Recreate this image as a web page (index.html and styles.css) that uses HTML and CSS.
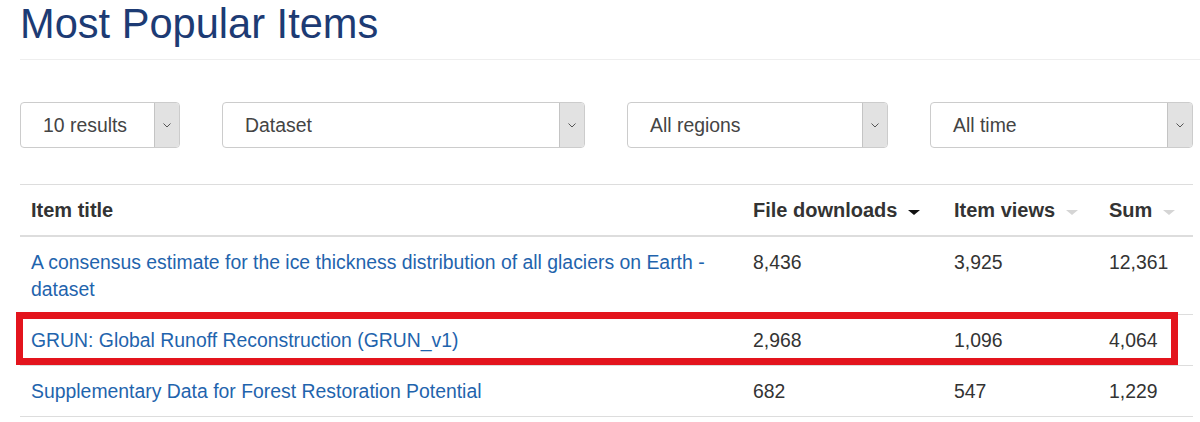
FILE: index.html
```html
<!DOCTYPE html>
<html lang="en">
<head>
<meta charset="utf-8">
<title>Most Popular Items</title>
<link rel="stylesheet" href="styles.css">
</head>
<body>
<div class="page">
  <h1 class="title">Most Popular Items</h1>
  <div class="filters">
    <div class="select s-results"><span class="sel-text">10 results</span><span class="sel-btn"><svg width="8" height="5" viewBox="0 0 8 5"><path d="M0.5 0.5 L4 4 L7.5 0.5" fill="none" stroke="#555" stroke-width="1"/></svg></span></div>
    <div class="select s-type"><span class="sel-text">Dataset</span><span class="sel-btn"><svg width="8" height="5" viewBox="0 0 8 5"><path d="M0.5 0.5 L4 4 L7.5 0.5" fill="none" stroke="#555" stroke-width="1"/></svg></span></div>
    <div class="select s-region"><span class="sel-text">All regions</span><span class="sel-btn"><svg width="8" height="5" viewBox="0 0 8 5"><path d="M0.5 0.5 L4 4 L7.5 0.5" fill="none" stroke="#555" stroke-width="1"/></svg></span></div>
    <div class="select s-time"><span class="sel-text">All time</span><span class="sel-btn"><svg width="8" height="5" viewBox="0 0 8 5"><path d="M0.5 0.5 L4 4 L7.5 0.5" fill="none" stroke="#555" stroke-width="1"/></svg></span></div>
  </div>
  <div class="table-wrap">
    <table class="items">
      <colgroup>
        <col class="c-title"><col class="c-dl"><col class="c-views"><col class="c-sum">
      </colgroup>
      <thead>
        <tr>
          <th>Item title</th>
          <th>File downloads <span class="caret active"></span></th>
          <th>Item views <span class="caret"></span></th>
          <th>Sum <span class="caret"></span></th>
        </tr>
      </thead>
      <tbody>
        <tr>
          <td><a href="#">A consensus estimate for the ice thickness distribution of all glaciers on Earth - dataset</a></td>
          <td>8,436</td><td>3,925</td><td>12,361</td>
        </tr>
        <tr>
          <td><a href="#">GRUN: Global Runoff Reconstruction (GRUN_v1)</a></td>
          <td>2,968</td><td>1,096</td><td>4,064</td>
        </tr>
        <tr>
          <td><a href="#">Supplementary Data for Forest Restoration Potential</a></td>
          <td>682</td><td>547</td><td>1,229</td>
        </tr>
      </tbody>
    </table>
    <div class="highlight"></div>
  </div>
</div>
</body>
</html>
```

FILE: styles.css
```css
html, body {
  margin: 0;
  padding: 0;
  background: #fff;
}
body {
  font-family: "Liberation Sans", Arial, sans-serif;
  color: #333;
}
.page {
  padding-left: 20px;
  width: 1173px;
}
.title {
  margin: 0;
  padding-top: 1px;
  font-size: 41.6px;
  line-height: 46px;
  font-weight: normal;
  color: #1d3b74;
  border-bottom: 1px solid #eee;
  padding-bottom: 12px;
  width: 1180px;
}
.filters {
  display: flex;
  gap: 42px;
  margin-top: 42px;
}
.select {
  display: flex;
  height: 46px;
  box-sizing: border-box;
  border: 1px solid #ccc;
  border-radius: 4px;
  background: #fff;
  overflow: hidden;
}
.sel-text {
  flex: 1;
  padding-left: 22px;
  font-size: 19.4px;
  line-height: 44px;
  color: #444;
}
.sel-btn {
  width: 24px;
  background: #e2e2e2;
  border-left: 1px solid #c4c4c4;
  display: flex;
  align-items: center;
  justify-content: center;
}
.s-results { width: 160px; }
.s-type { width: 363px; }
.s-region { width: 261px; }
.s-time { width: 263px; }
.table-wrap {
  position: relative;
  margin-top: 36px;
}
.items {
  width: 1173px;
  border-collapse: collapse;
  table-layout: fixed;
  font-size: 19.4px;
  line-height: 27px;
}
.c-title { width: 722px; }
.c-dl { width: 201px; }
.c-views { width: 155px; }
.c-sum { width: 95px; }
.items th, .items td {
  text-align: left;
  vertical-align: top;
  padding: 12px 11px;
  border-top: 1px solid #ddd;
}
.items th {
  font-size: 20px;
  font-weight: bold;
  color: #333;
  border-bottom: 2px solid #ddd;
  padding-top: 12px;
  padding-bottom: 11px;
  white-space: nowrap;
}
.items tbody tr:last-child td {
  border-bottom: 1px solid #ddd;
}
.items td {
  padding-bottom: 11px;
}
.items a {
  color: #1f64ad;
  text-decoration: none;
}
.caret {
  display: inline-block;
  width: 0;
  height: 0;
  border-left: 6px solid transparent;
  border-right: 6px solid transparent;
  border-top: 5px solid #d5d5d5;
  vertical-align: middle;
  margin-left: 5px;
  margin-top: 2px;
}
.caret.active {
  border-top-color: #111;
}
.highlight {
  position: absolute;
  left: -4px;
  top: 128px;
  width: 1162px;
  height: 53px;
  box-sizing: border-box;
  border: 7px solid #e3141d;
  pointer-events: none;
}
```
